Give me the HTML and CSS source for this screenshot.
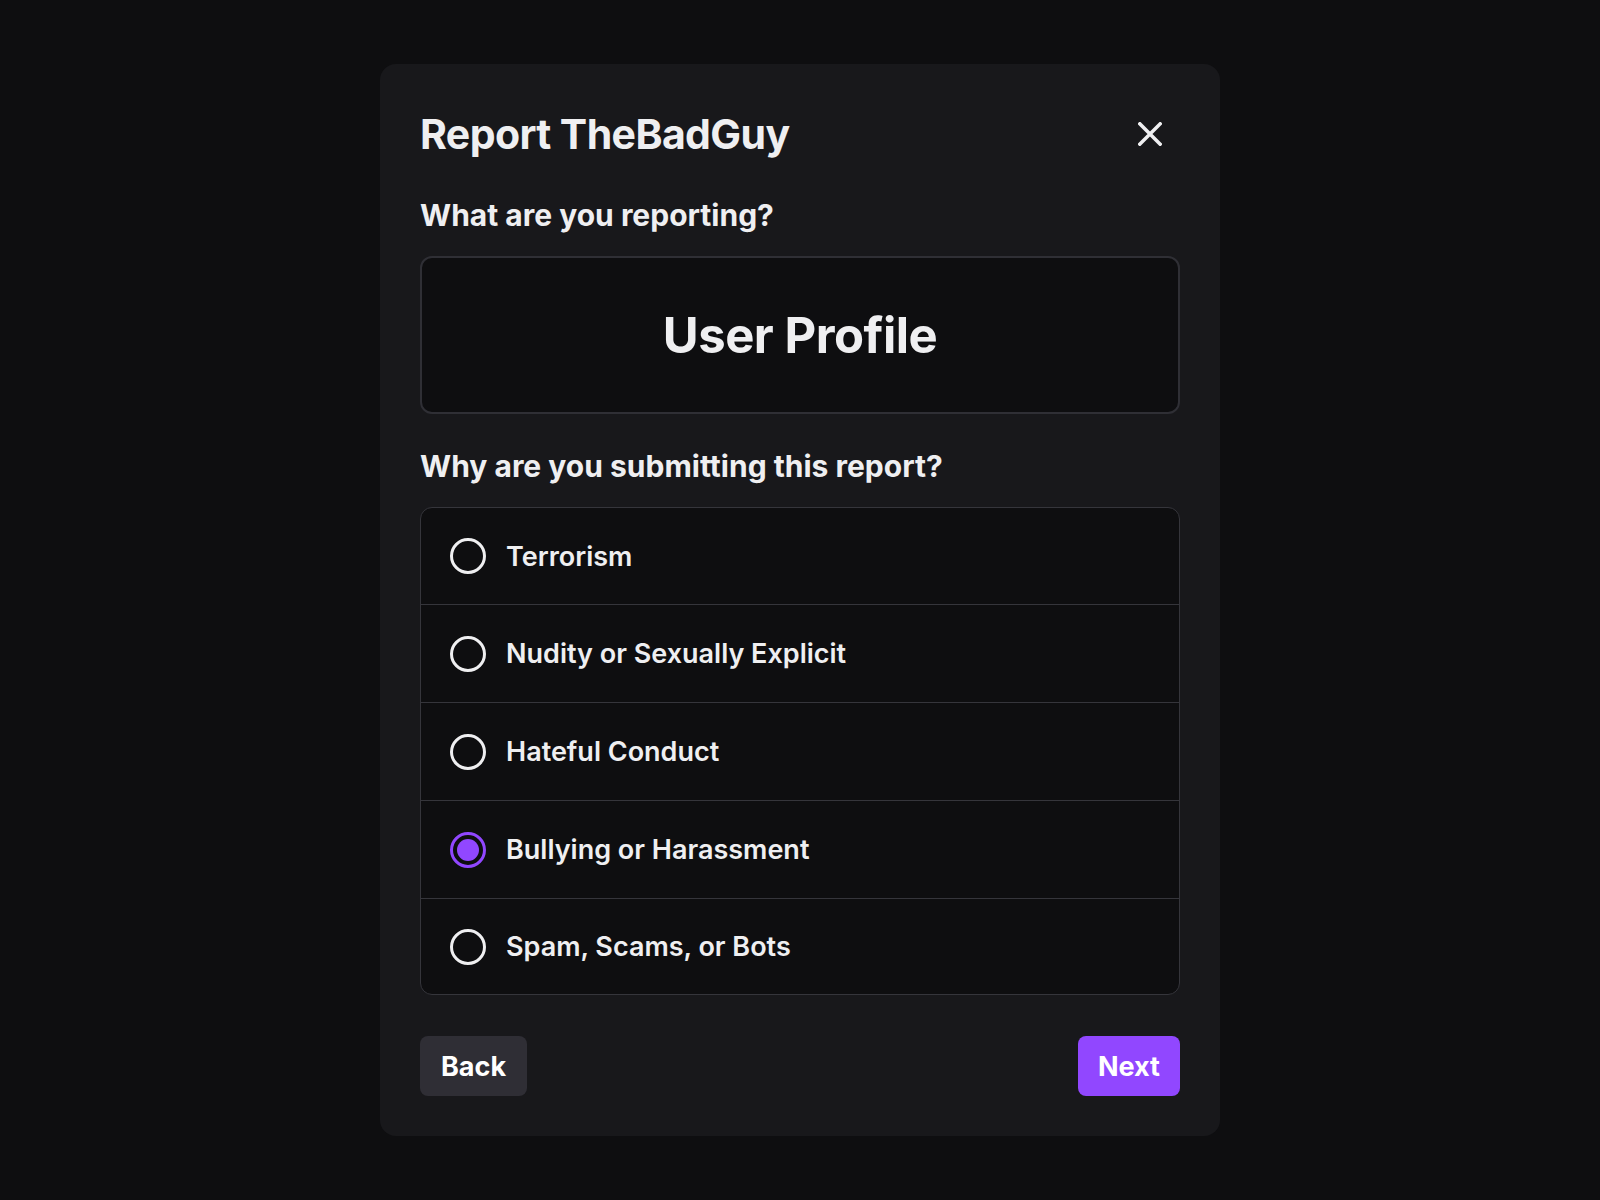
FILE: index.html
```html
<!DOCTYPE html>
<html lang="en">
<head>
<meta charset="utf-8">
<title>Report TheBadGuy</title>
<link rel="stylesheet" href="styles.css">
</head>
<body>
<div class="page">
  <div class="modal">
    <div class="header">
      <h1 class="title">Report TheBadGuy</h1>
      <button class="close" aria-label="Close">
        <svg width="24" height="24" viewBox="0 0 24 24"><path d="M1.8 1.8 L22.2 22.2 M22.2 1.8 L1.8 22.2" stroke="#efeff1" stroke-width="3.5" stroke-linecap="square" fill="none"/></svg>
      </button>
    </div>
    <div class="label first">What are you reporting?</div>
    <div class="target">User Profile</div>
    <div class="label">Why are you submitting this report?</div>
    <div class="options">
      <div class="option"><span class="radio"></span><span class="opt-text">Terrorism</span></div>
      <div class="option"><span class="radio"></span><span class="opt-text">Nudity or Sexually Explicit</span></div>
      <div class="option"><span class="radio"></span><span class="opt-text">Hateful Conduct</span></div>
      <div class="option"><span class="radio checked"></span><span class="opt-text">Bullying or Harassment</span></div>
      <div class="option"><span class="radio"></span><span class="opt-text">Spam, Scams, or Bots</span></div>
    </div>
    <div class="footer">
      <button class="btn back">Back</button>
      <button class="btn next">Next</button>
    </div>
  </div>
</div>
</body>
</html>
```
FILE: styles.css
```css
* { box-sizing: border-box; }
html, body {
  margin: 0;
  padding: 0;
  background: #0e0e10;
  font-family: Inter, Roboto, "Liberation Sans", sans-serif;
  color: #efeff1;
}
.page {
  width: 1600px;
  height: 1200px;
  padding-top: 64px;
  display: flex;
  justify-content: center;
  align-items: flex-start;
}
.modal {
  width: 840px;
  background: #18181b;
  border-radius: 16px;
  padding: 40px;
  display: flex;
  flex-direction: column;
}
.header {
  display: flex;
  justify-content: space-between;
  align-items: center;
  height: 60px;
}
.title {
  margin: 0;
  font-size: 41px;
  line-height: 60px;
  font-weight: 700;
  letter-spacing: -0.6px;
}
.close {
  width: 48px;
  height: 48px;
  margin-right: 6px;
  background: none;
  border: none;
  padding: 0;
  display: flex;
  align-items: center;
  justify-content: center;
  cursor: pointer;
}
.label {
  font-size: 30px;
  line-height: 36px;
  font-weight: 700;
  margin-top: 34px;
  margin-bottom: 23px;
}
.label.first { margin-top: 33px; }
.target {
  height: 158px;
  border: 2px solid #2f2f35;
  border-radius: 12px;
  background: #0e0e10;
  display: flex;
  align-items: center;
  justify-content: center;
  font-size: 49px;
  font-weight: 700;
  letter-spacing: -0.5px;
}
.options {
  border: 1px solid #35353b;
  border-radius: 12px;
  background: #0e0e10;
  overflow: hidden;
}
.option {
  height: 98px;
  display: flex;
  align-items: center;
  padding-left: 29px;
  gap: 20px;
  border-top: 1px solid #35353b;
}
.option:first-child { border-top: none; height: 96px; }
.option:last-child { height: 96px; }
.radio {
  width: 36px;
  height: 36px;
  border-radius: 50%;
  border: 3px solid #efeff1;
  flex: none;
  position: relative;
}
.radio.checked {
  border-color: #9147ff;
}
.radio.checked::after {
  content: "";
  position: absolute;
  left: 4px;
  top: 4px;
  width: 22px;
  height: 22px;
  border-radius: 50%;
  background: #9147ff;
}
.opt-text {
  font-size: 27px;
  font-weight: 600;
}
.footer {
  display: flex;
  justify-content: space-between;
  margin-top: 41px;
}
.btn {
  height: 60px;
  border: none;
  border-radius: 8px;
  padding: 0 20px;
  font-family: Inter, Roboto, "Liberation Sans", sans-serif;
  font-size: 27px;
  font-weight: 700;
  color: #ffffff;
  cursor: pointer;
}
.back { background: #2f2e35; padding: 0 21px; }
.next { background: #9147ff; }
```
